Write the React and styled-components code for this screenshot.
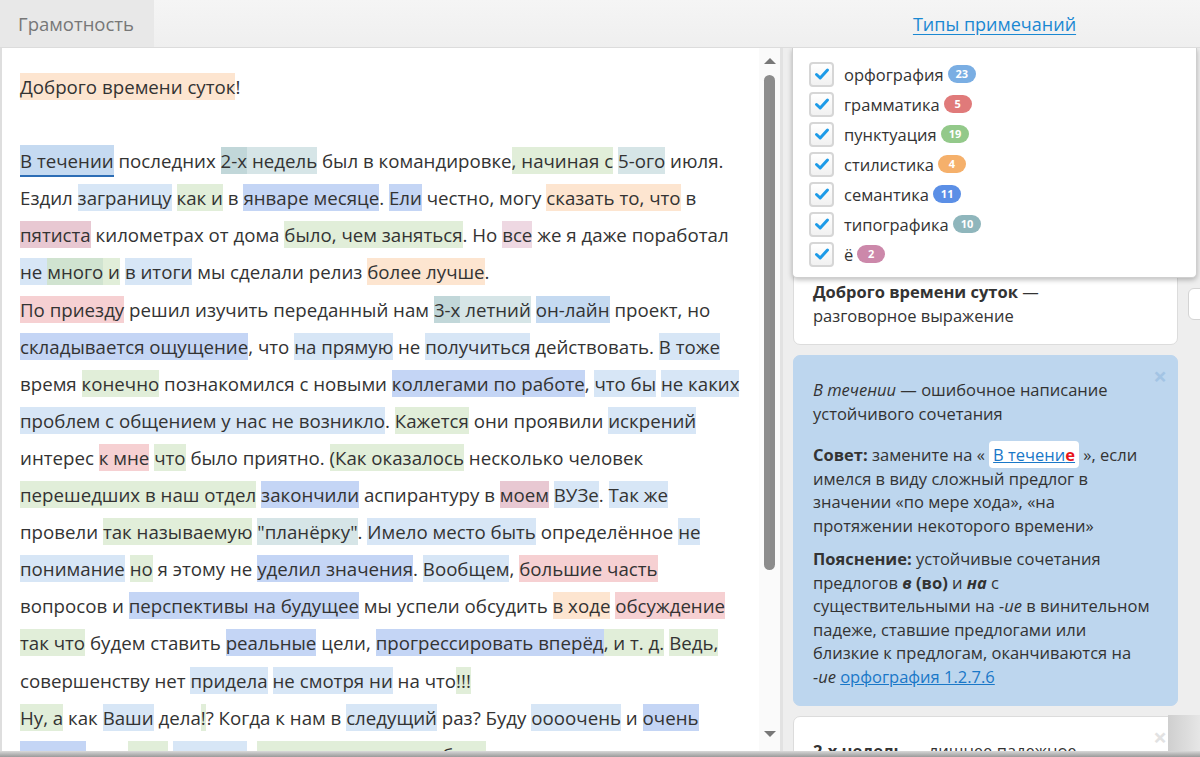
import React from 'react';
import styled, { createGlobalStyle } from 'styled-components';

const GlobalStyle = createGlobalStyle`
body {
    margin: 0;
    font-family: "Open Sans", "DejaVu Sans", sans-serif;
    color: #333;
    background: #fff;
}
`;

const colors = {
    peach: '#fde5d0',
    obl: '#c5daf1',
    lblue: '#d7e6f6',
    mblue: '#c4d5f5',
    green: '#e1eed9',
    dgreen: '#d0e3d0',
    teal: '#d6e5e7',
    tealD: '#c1d7d9',
    pink: '#f6d0d2',
    mauve: '#e8c8d2',
    lmauve: '#eed8e2',
};

const H = ({ c, children }) => <Hl $c={c}>{children}</Hl>;

const getLines = () => [
    <><H c="peach">Доброго времени суток</H>!</>,
    null,
    <><Active>В течении</Active> последних <H c="tealD">2-х</H><H c="teal"> недель</H> был в командировке<H c="green">, начиная с</H> <H c="teal">5-ого</H> июля.</>,
    <>Ездил <H c="lblue">заграницу</H> <H c="green">как и</H> в <H c="mblue">январе месяце</H>. <H c="mblue">Ели</H> честно, могу <H c="peach">сказать то, что</H> в</>,
    <><H c="mauve">пятиста</H> километрах от дома <H c="green">было, чем заняться</H>. Но <H c="lmauve">все</H> же я даже поработал</>,
    <><H c="lblue">не </H><H c="dgreen">много</H><H c="green"> и</H> <H c="lblue">в итоги</H> мы сделали релиз <H c="peach">более лучше</H>.</>,
    <><H c="pink">По приезду</H> решил изучить переданный нам <H c="tealD">3-х</H><H c="teal"> летний</H> <H c="obl">он-лайн</H> проект, но</>,
    <><H c="mblue">складывается ощущение</H>, что <H c="lblue">на прямую</H> не <H c="lblue">получиться</H> действовать. <H c="lblue">В тоже</H></>,
    <>время <H c="green">конечно</H> познакомился с новыми <H c="mblue">коллегами по работе</H>, <H c="lblue">что бы</H> <H c="lblue">не каких</H></>,
    <><H c="lblue">проблем с общением у нас не возникло</H>. <H c="green">Кажется</H> они проявили <H c="lblue">искрений</H></>,
    <>интерес <H c="pink">к мне</H> <H c="green">что</H> было приятно. <H c="green">(Как оказалось</H> несколько человек</>,
    <><H c="green">перешедших в наш отдел</H> <H c="mblue">закончили</H> аспирантуру в <H c="mauve">моем</H> <H c="lblue">ВУЗе</H>. <H c="lblue">Так же</H></>,
    <>провели <H c="green">так называемую</H> <H c="teal">"планёрку"</H>. <H c="lblue">Имело место быть</H> определённое <H c="lblue">не</H></>,
    <><H c="lblue">понимание</H> <H c="green">но</H> я этому не <H c="mblue">уделил значения</H>. <H c="lblue">Вообщем</H>, <H c="pink">большие часть</H></>,
    <>вопросов и <H c="mblue">перспективы на будущее</H> мы успели обсудить <H c="peach">в ходе</H> <H c="pink">обсуждение</H></>,
    <><H c="green">так что</H> будем ставить <H c="mblue">реальные</H> цели, <H c="mblue">прогрессировать вперёд</H><H c="green">, и т. д.</H> <H c="green">Ведь,</H></>,
    <>совершенству нет <H c="lblue">придела</H> <H c="lblue">не смотря ни</H> на что<H c="green">!!!</H></>,
    <><H c="green">Ну, а</H> как <H c="lblue">Ваши</H> дела<H c="green">!</H>? Когда к нам в <H c="lblue">следущий</H> раз? Буду <H c="lblue">оооочень</H> и <H c="mblue">очень</H></>,
    <><H c="mblue">сильно</H> рад <H c="green">всех</H> <H c="lblue">увидить</H>, <H c="green">как можно по подробнее</H></>,
];

const filters = [
    { label: 'орфография', count: 23, color: '#7aaee3' },
    { label: 'грамматика', count: 5, color: '#e07a7a' },
    { label: 'пунктуация', count: 19, color: '#93c98a' },
    { label: 'стилистика', count: 4, color: '#f5b06b' },
    { label: 'семантика', count: 11, color: '#5b8fe6' },
    { label: 'типографика', count: 10, color: '#8fb6bc' },
    { label: 'ё', count: 2, color: '#cc88aa' },
];

const CheckIcon = () => (
    <svg width="16" height="16" viewBox="0 0 16 16">
        <path d="M2.5 8.5 L6.2 12 L13.5 4" fill="none" stroke="#1d9be8" strokeWidth="3" strokeLinecap="round" strokeLinejoin="round" />
    </svg>
);

const App = () => {
    const lines = getLines();
    return (
        <Page>
            <GlobalStyle />
            <TopBar>
                <TabArea>
                    <Tab>Грамотность</Tab>
                </TabArea>
                <LinkArea>
                    <TypesLink href="#">Типы примечаний</TypesLink>
                </LinkArea>
            </TopBar>

            <Main>
                <Editor>
                    <TextArea>
                        {lines.map((l, i) => (
                            <Line key={i}>{l || '\u00a0'}</Line>
                        ))}
                    </TextArea>
                    <Scrollbar>
                        <Arrow />
                        <Thumb />
                        <Arrow $down />
                    </Scrollbar>
                </Editor>

                <Side>
                    <Cards>
                        <Card>
                            <CardText><b>Доброго времени суток</b> —<br />разговорное выражение</CardText>
                        </Card>

                        <Card $active>
                            <Close $active>×</Close>
                            <CardText><i>В течении</i> — ошибочное написание устойчивого сочетания</CardText>
                            <CardPara>
                                <b>Совет:</b> замените на « <Suggest><SuggestLink>В течени<Fix>е</Fix></SuggestLink></Suggest> », если имелся в виду сложный предлог в значении «по мере хода», «на протяжении некоторого времени»
                            </CardPara>
                            <CardPara $small>
                                <b>Пояснение:</b> устойчивые сочетания предлогов <b><i>в</i> (во)</b> и <b><i>на</i></b> с существительными на <i>-ие</i> в винительном падеже, ставшие предлогами или близкие к предлогам, оканчиваются на <i>-ие</i> <RuleLink href="#">орфография 1.2.7.6</RuleLink>
                            </CardPara>
                        </Card>

                        <Card>
                            <Close>×</Close>
                            <CardText><b>2-х недель</b> — лишнее падежное</CardText>
                        </Card>
                    </Cards>

                    <EdgeCard />
                    <CornerShade />

                    <Dropdown>
                        {filters.map(f => (
                            <FilterRow key={f.label}>
                                <Check><CheckIcon /></Check>
                                <FilterLabel>{f.label}</FilterLabel>
                                <Badge $color={f.color}>{f.count}</Badge>
                            </FilterRow>
                        ))}
                    </Dropdown>
                </Side>
            </Main>
            <BottomEdge />
        </Page>
    );
};

export default App;


const Page = styled.div`
height: 757px;
display: flex;
flex-direction: column;
overflow: hidden;
`;

const TopBar = styled.div`
height: 47px;
flex-shrink: 0;
display: grid;
grid-template-columns: 783px 1fr;
background: linear-gradient(#f5f5f5, #efefef);
border-bottom: 1px solid #dcdcdc;
`;

const TabArea = styled.div`
display: flex;
`;

const Tab = styled.div`
width: 154px;
background: #e8e8e8;
color: #777;
font-size: 18.5px;
display: flex;
align-items: center;
justify-content: center;
padding-right: 2px;
box-sizing: border-box;
`;

const LinkArea = styled.div`
display: flex;
align-items: center;
justify-content: center;
padding-left: 6px;
`;

const TypesLink = styled.a`
color: #1a88d2;
font-size: 18px;
text-decoration: underline;
text-underline-offset: 3px;
`;

const Main = styled.div`
flex: 1;
display: flex;
min-height: 0;
`;

const Editor = styled.div`
width: 783px;
flex-shrink: 0;
display: flex;
border-left: 2px solid #dedede;
box-sizing: border-box;
background: #fff;
`;

const TextArea = styled.div`
flex: 1;
padding: 20px 0 0 18px;
overflow: hidden;
font-size: 18.7px;
color: #333;
`;

const Line = styled.div`
line-height: 37.1px;
white-space: nowrap;
`;

const Hl = styled.span`
background: ${p => colors[p.$c]};
padding: 1px 0;
`;

const Active = styled.span`
background: ${colors.obl};
padding: 3px 0 2px;
border-bottom: 2px solid #2c6db5;
`;

const Scrollbar = styled.div`
width: 21px;
display: flex;
flex-direction: column;
align-items: center;
padding: 10px 0 14px;
background: #fafafa;
border-right: 3px solid #e2e2e2;
`;

const Arrow = styled.div`
width: 0;
height: 0;
border-left: 6px solid transparent;
border-right: 6px solid transparent;
${p => p.$down ? 'border-top: 6px solid #777; margin-top: auto;' : 'border-bottom: 6px solid #777;'}
`;

const Thumb = styled.div`
width: 11px;
height: 495px;
margin-top: 11px;
background: #8c8c8c;
border-radius: 6px;
`;

const Side = styled.div`
flex: 1;
position: relative;
background: #eeeeee;
overflow: hidden;
`;

const Cards = styled.div`
display: flex;
flex-direction: column;
gap: 10px;
padding: 209px 22px 0 10px;
`;

const Card = styled.div`
position: relative;
background: ${p => p.$active ? '#bdd6ee' : '#fff'};
border: 1px solid ${p => p.$active ? '#bdd6ee' : '#dcdcdc'};
border-radius: 7px;
padding: 22px 24px 17px 19px;
flex-shrink: 0;
`;

const Close = styled.span`
position: absolute;
top: 8px;
right: 10px;
font-size: 24px;
font-weight: 700;
line-height: 24px;
color: ${p => p.$active ? '#a3c4e4' : '#e2e2e2'};
`;

const CardText = styled.div`
font-size: 16.5px;
line-height: 23.5px;
color: #333;
`;

const CardPara = styled(CardText)`
margin-top: ${p => p.$small ? '10px' : '18px'};
`;

const Suggest = styled.span`
background: #fff;
border-radius: 4px;
padding: 2px 4px;
`;

const SuggestLink = styled.span`
color: #1a78c8;
text-decoration: underline;
`;

const Fix = styled.span`
color: #e8141b;
font-weight: 700;
`;

const RuleLink = styled.a`
color: #1a78c8;
text-decoration: underline;
`;

const EdgeCard = styled.div`
position: absolute;
left: 405px;
top: 240px;
width: 40px;
height: 30px;
background: #fff;
border: 1px solid #d4d4d4;
border-radius: 6px;
`;

const CornerShade = styled.div`
position: absolute;
right: 0;
bottom: 0;
width: 32px;
height: 36px;
background: linear-gradient(90deg, #cfcfcf, #e6e6e6);
`;

const Dropdown = styled.div`
position: absolute;
top: 0;
left: 9px;
right: 3px;
height: 230px;
box-sizing: border-box;
padding: 11px 16px 0;
background: #fff;
border: 1px solid #cfcfcf;
border-top: none;
border-radius: 0 0 5px 5px;
box-shadow: 0 2px 5px rgba(0, 0, 0, 0.25);
`;

const FilterRow = styled.div`
height: 30px;
display: flex;
align-items: center;
`;

const Check = styled.div`
width: 21px;
height: 21px;
border: 2px solid #d6d6d6;
border-radius: 4px;
background: linear-gradient(#fff, #f1f1f1);
display: flex;
align-items: center;
justify-content: center;
margin-right: 10px;
`;

const FilterLabel = styled.span`
font-size: 16.5px;
color: #333;
`;

const Badge = styled.span`
margin-left: 4px;
height: 18px;
min-width: 12px;
padding: 0 8px;
border-radius: 9px;
background: ${p => p.$color};
color: #fff;
font-size: 11px;
font-weight: 700;
line-height: 18px;
text-align: center;
`;

const BottomEdge = styled.div`
height: 6px;
flex-shrink: 0;
background: linear-gradient(#d8d8d8, #9a9a9a);
`;
